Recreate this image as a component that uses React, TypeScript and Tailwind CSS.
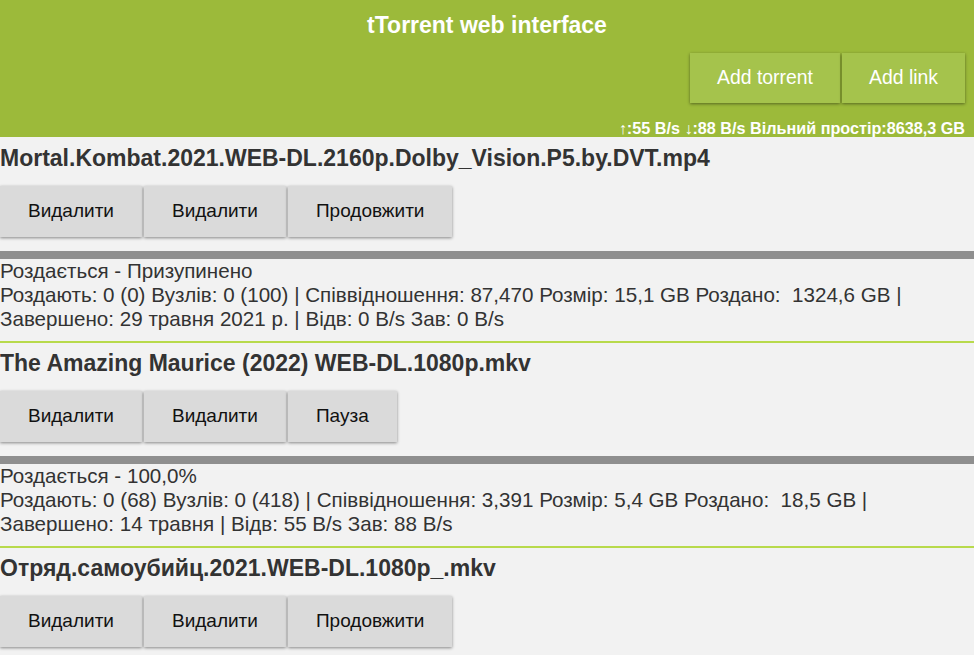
import React from "react";

interface TorrentProps {
  name: string;
  action: string;
  state: string;
  peers: string;
  done: string;
}

const torrents: TorrentProps[] = [
  {
    name: "Mortal.Kombat.2021.WEB-DL.2160p.Dolby_Vision.P5.by.DVT.mp4",
    action: "Продовжити",
    state: "Роздається - Призупинено",
    peers: "Роздають: 0 (0) Вузлів: 0 (100) | Співвідношення: 87,470 Розмір: 15,1 GB Роздано:\u00a0 1324,6 GB |",
    done: "Завершено: 29 травня 2021 р. | Відв: 0 B/s Зав: 0 B/s",
  },
  {
    name: "The Amazing Maurice (2022) WEB-DL.1080p.mkv",
    action: "Пауза",
    state: "Роздається - 100,0%",
    peers: "Роздають: 0 (68) Вузлів: 0 (418) | Співвідношення: 3,391 Розмір: 5,4 GB Роздано:\u00a0 18,5 GB |",
    done: "Завершено: 14 травня | Відв: 55 B/s Зав: 88 B/s",
  },
  {
    name: "Отряд.самоубийц.2021.WEB-DL.1080p_.mkv",
    action: "Продовжити",
    state: "",
    peers: "",
    done: "",
  },
];

function GrayButton({ label }: { label: string }) {
  return (
    <button className="h-[51px] px-[28px] bg-[#dadada] text-[19px] text-[#111] shadow-[0_1px_3px_rgba(0,0,0,0.45)]">
      {label}
    </button>
  );
}

function Torrent(props: TorrentProps & { first?: boolean; last?: boolean }) {
  return (
    <div className={props.last ? "" : "border-b-2 border-[#b8da4c] pb-[10px]"}>
      <h2 className={`${props.first ? "pt-[9px]" : "pt-[8px]"} text-[23px] leading-[24px] font-bold text-[#333]`}>{props.name}</h2>
      <div className="mt-[16px] flex gap-[2px]">
        <GrayButton label="Видалити" />
        <GrayButton label="Видалити" />
        <GrayButton label={props.action} />
      </div>
      {props.state && (
        <>
          <div className="mt-[14px] h-[8px] bg-[#8f8f8f]" />
          <div className="text-[20.6px] leading-[24px] text-[#333]">
            <p>{props.state}</p>
            <p>{props.peers}</p>
            <p>{props.done}</p>
          </div>
        </>
      )}
    </div>
  );
}

export default function App() {
  return (
    <div className="min-h-[655px] bg-[#f2f2f2] font-['Liberation_Sans',Arial,sans-serif] overflow-hidden">
      <header className="bg-[#9cba3a] h-[137px] px-[9px] flex flex-col">
        <h1 className="pt-[12px] text-center text-[23px] leading-[26px] font-bold text-white">tTorrent web interface</h1>
        <div className="mt-[15px] flex justify-end gap-[2px]">
          <button className="h-[50px] px-[27px] bg-[#a5c34c] text-white text-[19.4px] shadow-[0_1px_3px_rgba(0,0,0,0.45)]">
            Add torrent
          </button>
          <button className="h-[50px] px-[27px] bg-[#a5c34c] text-white text-[19.4px] shadow-[0_1px_3px_rgba(0,0,0,0.45)]">
            Add link
          </button>
        </div>
        <div className="mt-[16px] text-right text-[16.2px] leading-[18px] font-bold text-white">
          ↑:55 B/s ↓:88 B/s Вільний простір:8638,3 GB
        </div>
      </header>
      {torrents.map((t, i) => (
        <Torrent key={i} {...t} first={i === 0} last={i === torrents.length - 1} />
      ))}
    </div>
  );
}
